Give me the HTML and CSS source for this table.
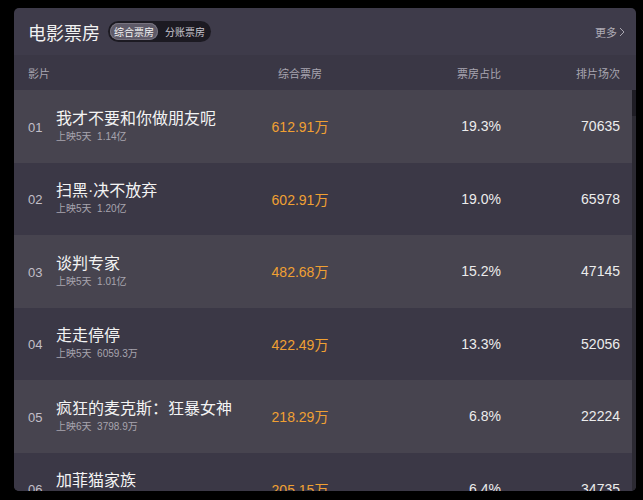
FILE: index.html
```html
<!DOCTYPE html>
<html lang="zh">
<head>
<meta charset="utf-8">
<link rel="stylesheet" href="styles.css">
</head>
<body>
<div class="panel">
  <div class="top">
    <div class="title">电影票房</div>
    <div class="toggle">
      <span class="seg active">综合票房</span>
      <span class="seg">分账票房</span>
    </div>
    <div class="more">更多<svg width="6" height="10" viewBox="0 0 6 10"><path d="M1 1 L5 5 L1 9" fill="none" stroke="#a9a6b0" stroke-width="1"/></svg></div>
  </div>
  <div class="cols grid">
    <span>影片</span>
    <span></span>
    <span class="c">综合票房</span>
    <span class="r">票房占比</span>
    <span class="r">排片场次</span>
  </div>
  <div class="body">
    <div class="rows">
      <div class="row grid odd">
        <span class="rank">01</span>
        <div class="film"><div class="name">我才不要和你做朋友呢</div><div class="sub">上映5天&nbsp; 1.14亿</div></div>
        <span class="c box">612.91万</span>
        <span class="r num">19.3%</span>
        <span class="r num">70635</span>
      </div>
      <div class="row grid">
        <span class="rank">02</span>
        <div class="film"><div class="name">扫黑·决不放弃</div><div class="sub">上映5天&nbsp; 1.20亿</div></div>
        <span class="c box">602.91万</span>
        <span class="r num">19.0%</span>
        <span class="r num">65978</span>
      </div>
      <div class="row grid odd">
        <span class="rank">03</span>
        <div class="film"><div class="name">谈判专家</div><div class="sub">上映5天&nbsp; 1.01亿</div></div>
        <span class="c box">482.68万</span>
        <span class="r num">15.2%</span>
        <span class="r num">47145</span>
      </div>
      <div class="row grid">
        <span class="rank">04</span>
        <div class="film"><div class="name">走走停停</div><div class="sub">上映5天&nbsp; 6059.3万</div></div>
        <span class="c box">422.49万</span>
        <span class="r num">13.3%</span>
        <span class="r num">52056</span>
      </div>
      <div class="row grid odd">
        <span class="rank">05</span>
        <div class="film"><div class="name">疯狂的麦克斯：狂暴女神</div><div class="sub">上映6天&nbsp; 3798.9万</div></div>
        <span class="c box">218.29万</span>
        <span class="r num">6.8%</span>
        <span class="r num">22224</span>
      </div>
      <div class="row grid">
        <span class="rank">06</span>
        <div class="film"><div class="name">加菲猫家族</div><div class="sub">上映6天&nbsp; 3512.4万</div></div>
        <span class="c box">205.15万</span>
        <span class="r num">6.4%</span>
        <span class="r num">34735</span>
      </div>
    </div>
    <div class="scroll"><div class="thumb"></div></div>
  </div>
</div>
</body>
</html>
```
FILE: styles.css
```css
html, body {
  margin: 0;
  padding: 0;
  background: #000;
}
body {
  padding: 8px 7px 0 14px;
  font-family: "Liberation Sans", "Noto Sans CJK SC", sans-serif;
  color: #eee;
}
.panel {
  width: 622px;
  height: 483px;
  background: #3e3b4a;
  border-radius: 5px;
  overflow: hidden;
  display: flex;
  flex-direction: column;
}
.top {
  height: 47px;
  flex: none;
  display: flex;
  align-items: center;
  padding: 0 11px 0 14px;
}
.title {
  font-family: "Noto Sans CJK SC", sans-serif;
  font-size: 18px;
  color: #f2f2f2;
  line-height: 24px;
}
.toggle {
  margin-left: 8px;
  height: 21px;
  border-radius: 11px;
  background: #1c1a22;
  display: flex;
  align-items: center;
  padding: 0 6px 0 2px;
  gap: 7px;
}
.seg {
  font-family: "Noto Sans CJK SC", sans-serif;
  font-size: 10px;
  color: #c9c6cf;
  line-height: 17px;
}
.seg.active {
  background: #5e5a68;
  border-radius: 9px;
  padding: 0 4px;
  color: #f4f4f4;
  box-shadow: inset 0 0 0 1px #77737f;
}
.more {
  margin-left: auto;
  font-family: "Noto Sans CJK SC", sans-serif;
  font-size: 11px;
  color: #aeabb5;
  display: flex;
  align-items: center;
  gap: 2px;
}
.grid {
  display: grid;
  grid-template-columns: 28px 194px 100px 151px 119px;
  padding-left: 14px;
  align-items: center;
}
.cols {
  height: 35px;
  flex: none;
  background: #3a3745;
  font-family: "Noto Sans CJK SC", sans-serif;
  font-size: 11px;
  color: #a8a5b0;
}
.c { text-align: center; }
.r { text-align: right; }
.body {
  flex: 1;
  display: flex;
  min-height: 0;
}
.rows {
  flex: 1;
  overflow: hidden;
}
.row {
  height: 72.5px;
  background: #3b3846;
}
.row.odd {
  background: #47444f;
}
.rank {
  font-size: 13px;
  color: #c2bfc8;
  padding-top: 2px;
}
.film {
  display: flex;
  flex-direction: column;
}
.name {
  font-family: "Liberation Sans", "Noto Sans CJK SC", sans-serif;
  font-size: 16px;
  line-height: 20px;
  color: #f3f3f3;
  white-space: nowrap;
}
.sub {
  font-size: 10px;
  line-height: 14px;
  color: #a7a4ae;
  margin-top: 1px;
}
.box {
  font-size: 14px;
  color: #f0a033;
}
.num {
  font-size: 14px;
  color: #ececec;
}
.scroll {
  width: 4px;
  flex: none;
  background: #2c2a33;
}
.thumb {
  height: 26px;
  background: #1f1d25;
}
```
